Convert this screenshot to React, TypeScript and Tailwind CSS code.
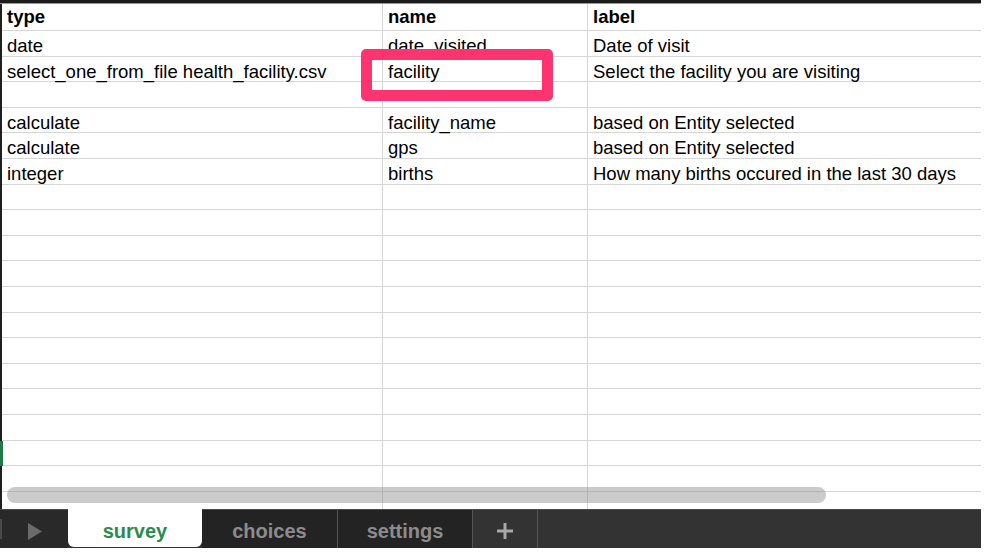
import React from 'react'

const rows: [string, string, string][] = [
  ['date', 'date_visited', 'Date of visit'],
  ['select_one_from_file health_facility.csv', 'facility', 'Select the facility you are visiting'],
  ['', '', ''],
  ['calculate', 'facility_name', 'based on Entity selected'],
  ['calculate', 'gps', 'based on Entity selected'],
  ['integer', 'births', 'How many births occured in the last 30 days'],
  ...Array.from({ length: 12 }, () => ['', '', ''] as [string, string, string]),
]

const Cell = ({ children, last = false }: { children?: React.ReactNode; last?: boolean }) => (
  <div
    className={`h-full whitespace-nowrap px-[5px] pt-[3px] leading-[24px] ${
      last ? '' : 'border-r border-[#d6d6d6]'
    }`}
  >
    {children}
  </div>
)

const App: React.FC = () => {
  return (
    <div className="relative h-[553px] w-[989px] overflow-hidden bg-white font-['Liberation_Sans',Arial,sans-serif] text-[18.5px] text-black">
      <div className="w-[981px]">
        {/* top frame */}
        <div className="h-[4px] border-b border-[#9a9a9a] bg-[#1b1b1b]" />

        <div className="border-l-2 border-[#1f1f1f]">
          {/* header */}
          <div className="grid h-[27px] grid-cols-[381px_205px_1fr] border-b border-[#d6d6d6] font-bold">
            <div className="h-full border-r border-[#d6d6d6] px-[5px] pt-[1px] leading-[24px]">type</div>
            <div className="h-full border-r border-[#d6d6d6] px-[5px] pt-[1px] leading-[24px]">name</div>
            <div className="h-full px-[5px] pt-[1px] leading-[24px]">label</div>
          </div>

          {rows.map((r, i) => (
            <div
              key={i}
              className="grid h-[25.6px] grid-cols-[381px_205px_1fr] border-b border-[#d6d6d6]"
            >
              <Cell>{r[0]}</Cell>
              <Cell>{r[1]}</Cell>
              <Cell last>{r[2]}</Cell>
            </div>
          ))}

          {/* filler below last row */}
          <div className="grid h-[17.2px] grid-cols-[381px_205px_1fr]">
            <Cell />
            <Cell />
            <Cell last />
          </div>
        </div>

        {/* sheet tabs */}
        <div className="flex h-[39px] border-t border-[#4a4a4a] bg-[#333333] font-bold text-[20px]">
          <div className="flex w-[68px] items-center bg-[#292929]">
            <div className="h-[20px] w-[2px] bg-[#4a4a4a]" />
            <svg width="14" height="17" viewBox="0 0 14 17" className="ml-[26px] mt-[6px]">
              <path d="M0 0 L14 8.5 L0 17 Z" fill="#6b6b6b" />
            </svg>
          </div>
          <div className="-mt-px flex h-[38px] w-[134px] items-center justify-center rounded-b-[6px] bg-white pt-[6px] text-[#2b8a4e]">
            survey
          </div>
          <div className="flex w-[136px] items-center justify-center border-r border-[#555555] bg-[#232323] pt-[5px] text-[#8c8c8c]">
            choices
          </div>
          <div className="flex w-[135px] items-center justify-center border-r border-[#555555] bg-[#232323] pt-[5px] text-[#8c8c8c]">
            settings
          </div>
          <div className="flex w-[65px] items-center justify-center border-r border-[#555555] pt-[5px]">
            <svg width="18" height="18" viewBox="0 0 18 18">
              <path d="M9 1 V17 M1 9 H17" stroke="#a8a8a8" strokeWidth="3" />
            </svg>
          </div>
          <div className="flex-1" />
        </div>
      </div>

      {/* active row marker */}
      <div className="absolute left-0 top-[441px] h-[25px] w-[3px] bg-[#1f7a47]" />

      {/* horizontal scrollbar */}
      <div className="absolute left-[7px] top-[487px] h-[16px] w-[819px] rounded-full bg-[rgba(140,140,140,0.45)]" />

      {/* highlight box */}
      <div className="absolute left-[361px] top-[49px] h-[52px] w-[192px] rounded-[5px] border-[11px] border-[#fd3470]" />
    </div>
  )
}

export default App
